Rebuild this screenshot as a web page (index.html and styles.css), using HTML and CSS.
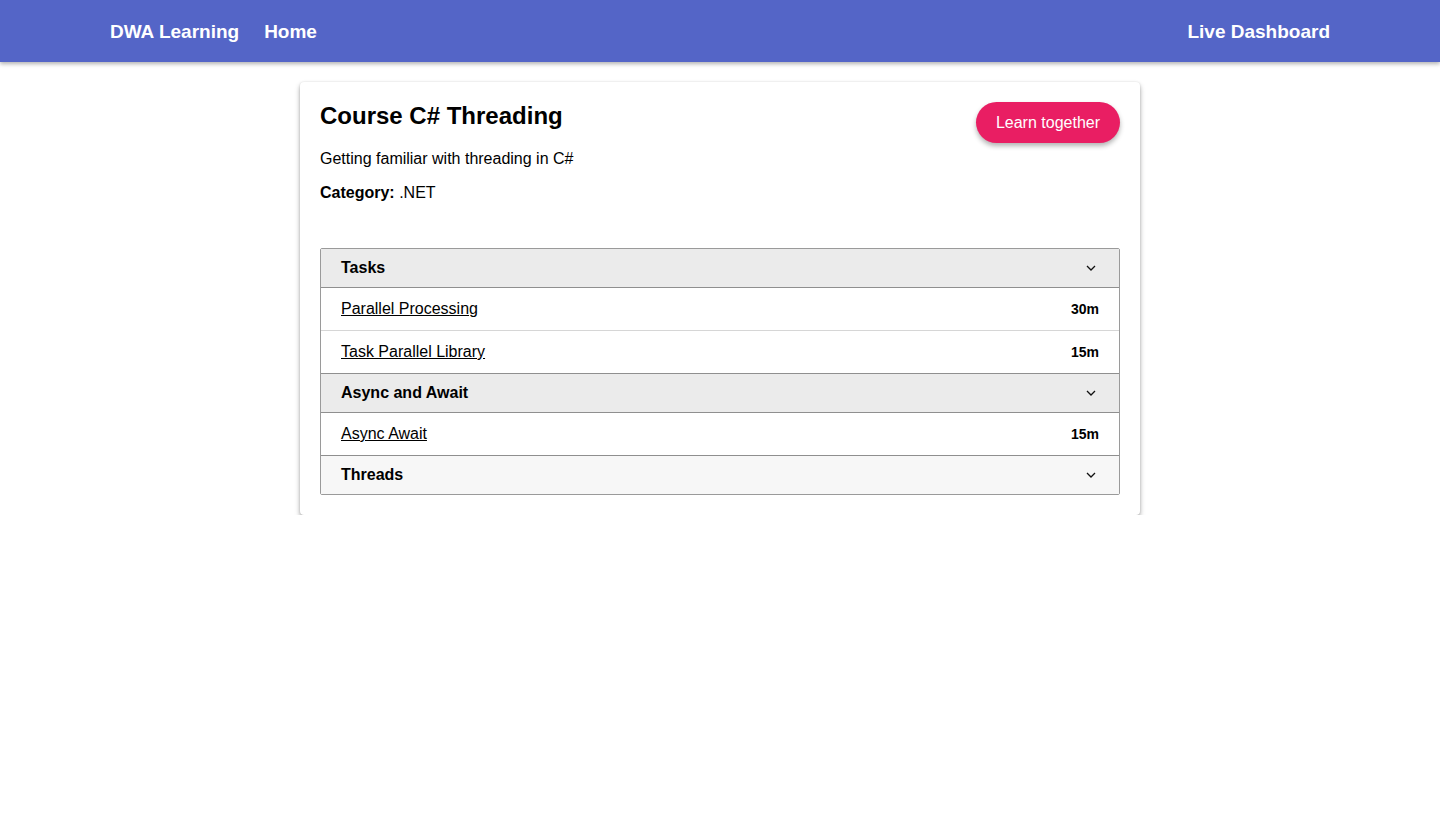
FILE: index.html
```html
<!DOCTYPE html>
<html lang="en">
<head>
<meta charset="utf-8">
<title>DWA Learning</title>
<link rel="stylesheet" href="styles.css">
</head>
<body>
<header class="navbar">
  <div class="nav-left">
    <a class="brand" href="#">DWA Learning</a>
    <a class="nav-link" href="#">Home</a>
  </div>
  <a class="nav-link" href="#">Live Dashboard</a>
</header>
<main class="main">
  <section class="card">
    <div class="card-head">
      <div class="card-info">
        <h1 class="title">Course C# Threading</h1>
        <p class="desc">Getting familiar with threading in C#</p>
        <p class="category"><strong>Category:</strong> .NET</p>
      </div>
      <button class="btn-learn">Learn together</button>
    </div>
    <div class="accordion">
      <div class="acc-header open">
        <span>Tasks</span>
        <svg class="chev" width="10" height="6" viewBox="0 0 10 6"><path d="M1 1l4 4 4-4" fill="none" stroke="#111" stroke-width="1.3"/></svg>
      </div>
      <div class="acc-item"><a href="#">Parallel Processing</a><span class="dur">30m</span></div>
      <div class="acc-item"><a href="#">Task Parallel Library</a><span class="dur">15m</span></div>
      <div class="acc-header open">
        <span>Async and Await</span>
        <svg class="chev" width="10" height="6" viewBox="0 0 10 6"><path d="M1 1l4 4 4-4" fill="none" stroke="#111" stroke-width="1.3"/></svg>
      </div>
      <div class="acc-item"><a href="#">Async Await</a><span class="dur">15m</span></div>
      <div class="acc-header closed">
        <span>Threads</span>
        <svg class="chev" width="10" height="6" viewBox="0 0 10 6"><path d="M1 1l4 4 4-4" fill="none" stroke="#111" stroke-width="1.3"/></svg>
      </div>
    </div>
  </section>
</main>
</body>
</html>
```
FILE: styles.css
```css
* { box-sizing: border-box; }
body {
  margin: 0;
  font-family: "Liberation Sans", Arial, Helvetica, sans-serif;
  color: #000;
  background: #fff;
}
.navbar {
  height: 62px;
  background: #5465c7;
  display: flex;
  align-items: center;
  justify-content: space-between;
  padding: 2px 110px 0 110px;
  box-shadow: 0 2px 4px rgba(0,0,0,0.3);
}
.nav-left { display: flex; gap: 25px; align-items: center; }
.brand, .nav-link {
  color: #fff;
  text-decoration: none;
  font-weight: bold;
  font-size: 19px;
}
.main {
  display: flex;
  justify-content: center;
  padding-top: 20px;
}
.card {
  width: 840px;
  background: #fff;
  border-radius: 4px;
  box-shadow: 0 3px 5px rgba(0,0,0,0.35), 0 0 2px rgba(0,0,0,0.12);
  padding: 20px 20px 20px 20px;
}
.card-head {
  display: flex;
  justify-content: space-between;
  align-items: flex-start;
}
.title {
  margin: 0;
  font-size: 24px;
  font-weight: bold;
  line-height: 28px;
}
.desc {
  margin: 19px 0 0 0;
  font-size: 16px;
  line-height: 20px;
}
.category {
  margin: 14px 0 0 0;
  font-size: 16px;
  line-height: 20px;
}
.btn-learn {
  margin-top: 0;
  height: 41px;
  padding: 0 20px;
  border: none;
  border-radius: 21px;
  background: #e91e63;
  color: #fff;
  font-family: inherit;
  font-size: 16px;
  box-shadow: 0 3px 5px rgba(0,0,0,0.3);
}
.accordion {
  margin-top: 45px;
  border: 1px solid #9a9a9a;
  border-radius: 2px;
}
.acc-header {
  height: 39px;
  display: flex;
  align-items: center;
  justify-content: space-between;
  padding: 0 23px 0 20px;
  font-weight: bold;
  font-size: 16px;
}
.acc-header.open { background: #ebebeb; border-bottom: 1px solid #8f8f8f; }
.acc-header.closed { background: #f7f7f7; height: 38px; }
.acc-item {
  height: 43px;
  display: flex;
  align-items: center;
  justify-content: space-between;
  padding: 0 20px;
  font-size: 16px;
  border-bottom: 1px solid #d6d6d6;
}
.acc-item:has(+ .acc-header) { border-bottom: 1px solid #8f8f8f; }
.acc-item a { color: #000; text-decoration: underline; }
.dur { font-weight: bold; font-size: 14px; }
.chev { display: block; }
```
